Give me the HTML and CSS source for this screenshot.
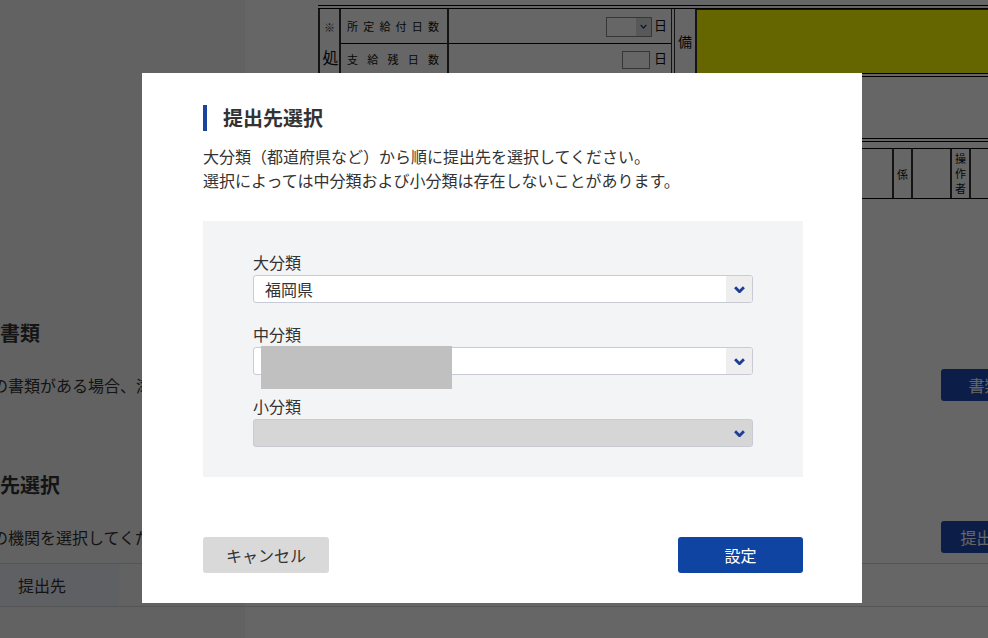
FILE: index.html
```html
<!DOCTYPE html>
<html lang="ja">
<head>
  <meta charset="UTF-8" />
  <meta name="viewport" content="width=device-width, initial-scale=1.0" />
  <title>提出先選択</title>
  <link rel="stylesheet" href="styles.css">
</head>
<body>

  <div class="page">
    <!-- 帳票（背景） -->
    <div class="sheet">
      <div class="sheet-head">
        <table class="grid-a">
          <tr>
            <td class="mark" rowspan="2"><span class="kome">※</span><span class="sho">処</span></td>
            <td class="label">所定給付日数</td>
            <td class="value">
              <span class="mini-select"><span class="mini-arrow"><svg viewBox="0 0 10 6"><path d="M1 1l4 4 4-4"/></svg></span></span>日
            </td>
          </tr>
          <tr>
            <td class="label">支給残日数</td>
            <td class="value"><span class="mini-input"></span>日</td>
          </tr>
        </table>
        <div class="bikou">備</div>
        <div class="olive"></div>
      </div>
      <div class="sheet-mid"></div>
      <div class="sheet-staff">
        <div class="st-cell st-wide"></div>
        <div class="st-cell st-narrow">係</div>
        <div class="st-cell st-blank"></div>
        <div class="st-cell st-narrow st-vert">操<br>作<br>者</div>
        <div class="st-cell st-rest"></div>
      </div>
    </div>

    <div class="content">
      <section class="sect sect-first">
        <h2 class="sect-title">添付書類</h2>
        <div class="sect-row">
          <p class="sect-desc">以下の書類がある場合、添付してください。</p>
          <button class="btn-page">書類添付</button>
        </div>
      </section>
      <section class="sect sect-second">
        <h2 class="sect-title">提出先選択</h2>
        <div class="sect-row">
          <p class="sect-desc">対象の機関を選択してください。</p>
          <button class="btn-page">提出先選択</button>
        </div>
        <div class="dest-row">
          <div class="dest-head">提出先</div>
          <div class="dest-val"></div>
        </div>
      </section>
    </div>
  </div>

  <div class="overlay">
    <div class="modal">
      <h2 class="modal-title">提出先選択</h2>
      <p class="modal-desc">大分類（都道府県など）から順に提出先を選択してください。<br>選択によっては中分類および小分類は存在しないことがあります。</p>

      <div class="panel">
        <div class="field">
          <label class="field-label">大分類</label>
          <div class="select">
            <span class="select-text">福岡県</span>
            <span class="select-arrow"><svg viewBox="0 0 10 6"><path d="M1 1l4 4 4-4"/></svg></span>
          </div>
        </div>
        <div class="field">
          <label class="field-label">中分類</label>
          <div class="select">
            <span class="select-text"></span>
            <span class="select-arrow"><svg viewBox="0 0 10 6"><path d="M1 1l4 4 4-4"/></svg></span>
            <span class="masked"></span>
          </div>
        </div>
        <div class="field">
          <label class="field-label">小分類</label>
          <div class="select disabled">
            <span class="select-text"></span>
            <span class="select-arrow"><svg viewBox="0 0 10 6"><path d="M1 1l4 4 4-4"/></svg></span>
          </div>
        </div>
      </div>

      <div class="modal-actions">
        <button class="btn btn-cancel">キャンセル</button>
        <button class="btn btn-ok">設定</button>
      </div>
    </div>
  </div>

</body>
</html>
```

FILE: styles.css
```css
html, body {
  margin: 0;
  padding: 0;
  overflow: hidden;
}

body {
  width: 988px;
  height: 638px;
  font-family: "Noto Sans CJK JP", "Noto Sans", sans-serif;
  color: #333;
  background: #fff;
}

.page {
  width: 988px;
  height: 638px;
  overflow: hidden;
  background: linear-gradient(to right, #f6f6f6 0, #f6f6f6 245px, #fff 245px);
}

/* 帳票 */
.sheet {
  margin-left: 318px;
  padding-top: 5px;
  width: 700px;
  color: #111;
}

.sheet-head {
  display: flex;
  border-top: 4px double #000;
  height: 64px;
}

.grid-a {
  border-collapse: collapse;
  width: 357px;
  height: 64px;
  border-left: 2px solid #333;
  border-right: 4px double #333;
  background: #fff;
}

.grid-a td {
  padding: 0;
  border-right: 2px solid #333;
  font-size: 11px;
}

.grid-a tr:first-child td.label,
.grid-a tr:first-child td.value {
  border-bottom: 1px solid #000;
  height: 34px;
}

.mark {
  width: 19px;
  text-align: center;
  vertical-align: top;
}

.kome {
  display: block;
  margin-top: 10px;
  font-size: 11px;
  color: #333;
}

.sho {
  display: block;
  margin-top: 10px;
  font-size: 16px;
  margin-left: 2px;
}

.label {
  width: 92px;
  padding: 0 8px 0 6px !important;
  text-align: justify;
  text-align-last: justify;
}

.value {
  text-align: right;
  padding-right: 4px !important;
  font-size: 13px !important;
}

.mini-select {
  display: inline-flex;
  justify-content: flex-end;
  width: 44px;
  height: 18px;
  border: 1px solid #888;
  vertical-align: middle;
  margin-right: 2px;
  background: #fff;
}

.mini-arrow {
  width: 15px;
  background: #ddd;
  display: flex;
  align-items: center;
  justify-content: center;
}

.mini-arrow svg {
  width: 7px;
  height: 5px;
  fill: none;
  stroke: #1b3f94;
  stroke-width: 2;
}

.mini-input {
  display: inline-block;
  width: 26px;
  height: 16px;
  border: 1px solid #888;
  vertical-align: middle;
  margin-right: 4px;
}

.bikou {
  width: 20px;
  border-right: 2px solid #333;
  display: flex;
  align-items: center;
  justify-content: center;
  font-size: 14px;
}

.olive {
  flex: 1;
  background: #ffff00;
  border-top: 1px solid #333;
}

.sheet-mid {
  height: 61px;
  border-top: 4px double #000;
  border-bottom: 4px double #000;
}

.sheet-staff {
  display: flex;
  margin-top: 6px;
  height: 49px;
  border-top: 1px solid #000;
  border-bottom: 1px solid #000;
  font-size: 11px;
}

.st-cell {
  display: flex;
  align-items: center;
  justify-content: center;
}

.st-wide { width: 574px; border-right: 2px solid #333; }
.st-narrow { width: 17px; border-right: 2px solid #333; }
.st-blank { width: 37px; border-right: 2px solid #333; }
.st-vert { line-height: 15px; }
.st-rest { flex: 1; }

/* 下部の画面 */
.content {
  margin-left: -40px;
  width: 1100px;
}

.sect-title {
  margin: 0;
  font-size: 20px;
  line-height: 24px;
  font-weight: bold;
  color: #333;
}

.sect-first {
  margin-top: 122px;
}

.sect-second {
  margin-top: 72px;
}

.sect-row {
  display: flex;
  align-items: center;
  justify-content: space-between;
  margin-top: 24px;
}

.sect-desc {
  margin: 0;
  font-size: 16px;
  line-height: 24px;
}

.btn-page {
  width: 119px;
  height: 32px;
  border: none;
  border-radius: 3px;
  background: #1e4bb4;
  color: #fff;
  font-family: inherit;
  font-size: 16px;
}

.dest-row {
  display: flex;
  margin-top: 10px;
  border-top: 1px solid #d4d4d4;
  border-bottom: 1px solid #d4d4d4;
  height: 42px;
}

.dest-head {
  width: 101px;
  padding-left: 58px;
  background: #eef0fa;
  font-size: 16px;
  line-height: 42px;
}

.dest-val {
  flex: 1;
}

/* モーダル */
.overlay {
  position: fixed;
  inset: 0;
  background: rgba(0, 0, 0, 0.6);
}

.modal {
  position: absolute;
  left: 142px;
  top: 73px;
  width: 600px;
  padding: 32px 59px 30px 61px;
  background: #fff;
}

.modal-title {
  margin: 0;
  padding-left: 16px;
  border-left: 4px solid #1a44a0;
  font-size: 20px;
  line-height: 26px;
  font-weight: bold;
  color: #333;
}

.modal-desc {
  margin: 13px 0 0;
  font-size: 16px;
  line-height: 24px;
  color: #333;
}

.panel {
  margin-top: 29px;
  padding: 29px 50px 30px;
  background: #f3f4f6;
  display: flex;
  flex-direction: column;
  gap: 19px;
}

.field-label {
  display: block;
  font-size: 16px;
  line-height: 24px;
  margin-bottom: 1px;
  color: #333;
}

.select {
  position: relative;
  display: flex;
  height: 26px;
  border: 1px solid #c9cbd4;
  border-radius: 3px;
  background: #fff;
}

.select-text {
  flex: 1;
  padding-left: 11px;
  font-size: 16px;
  line-height: 26px;
  color: #333;
}

.select-arrow {
  width: 26px;
  background: #eeeeef;
  border-radius: 0 3px 3px 0;
  display: flex;
  align-items: center;
  justify-content: center;
}

.select-arrow svg {
  width: 11px;
  height: 7px;
  fill: none;
  stroke: #1b3f94;
  stroke-width: 2.6;
}

.select.disabled {
  background: #d6d6d6;
}

.select.disabled .select-arrow {
  background: transparent;
}

.masked {
  position: absolute;
  left: 7px;
  top: -2px;
  width: 191px;
  height: 43px;
  background: #c0c0c0;
}

.modal-actions {
  display: flex;
  justify-content: space-between;
  margin-top: 60px;
}

.btn {
  height: 36px;
  border: none;
  border-radius: 3px;
  font-family: inherit;
  font-size: 16px;
}

.btn-cancel {
  width: 126px;
  background: #d9d9d9;
  color: #333;
}

.btn-ok {
  width: 125px;
  background: #0f44a3;
  color: #fff;
}
```
